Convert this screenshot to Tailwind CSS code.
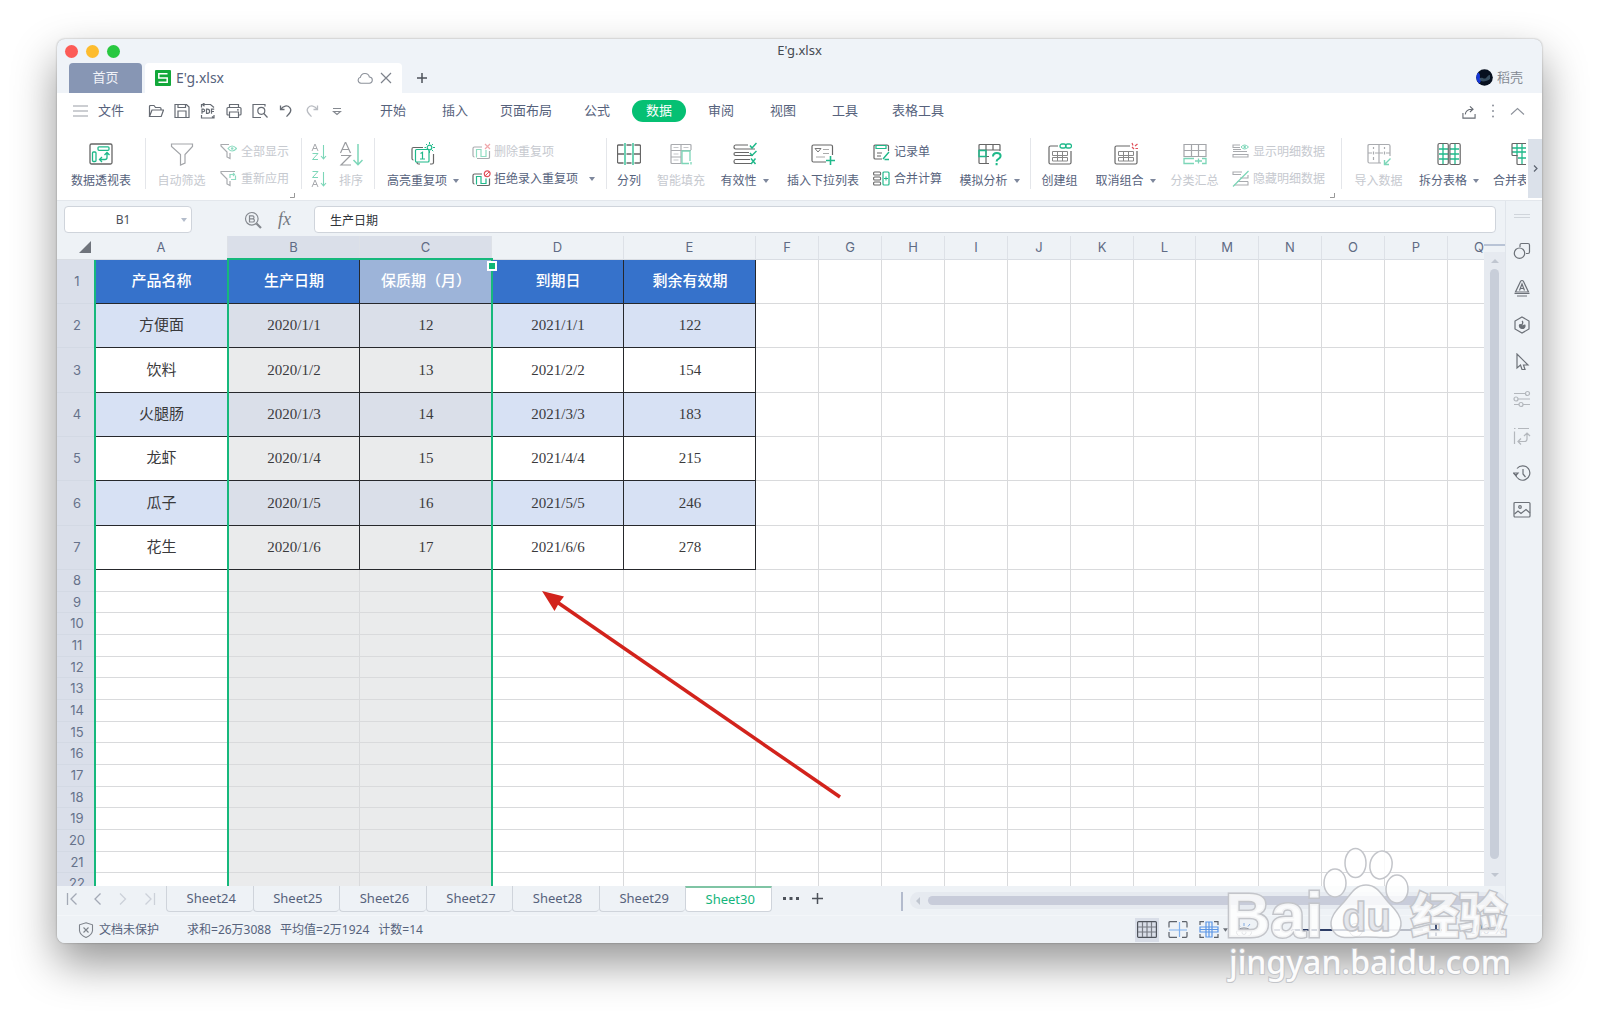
<!DOCTYPE html>
<html lang="zh-CN">
<head>
<meta charset="utf-8">
<title>E'g.xlsx</title>
<script src="https://cdn.jsdelivr.net/npm/@tailwindcss/browser@4"></script>
</head>
<body class="relative flex h-screen flex-col overflow-hidden bg-white font-['Noto_Sans','Noto_Sans_CJK_SC',sans-serif] text-xs text-[#56627c]">
<div class="mx-[57px] mt-[39px] mb-[76px] flex min-h-0 flex-1 flex-col overflow-hidden rounded-lg bg-[#eff3f8] shadow-[0_0_2px_rgba(0,0,0,0.35),0_20px_44px_rgba(0,0,0,0.42)]">

  <!-- title bar -->
  <header class="shrink-0">
    <div class="grid h-6 grid-cols-3 items-center">
      <div class="flex gap-2 pl-2">
        <span class="size-[13px] rounded-full bg-[#fc5b57]"></span>
        <span class="size-[13px] rounded-full bg-[#fdbc2e]"></span>
        <span class="size-[13px] rounded-full bg-[#28c840]"></span>
      </div>
      <h1 class="text-center text-[13px] text-[#454a52]">E'g.xlsx</h1>
    </div>
    <div class="flex h-[30px] items-center text-[13px]">
      <button class="ml-3 h-[30px] w-[73px] rounded-t-sm bg-[#8796b4] text-[#f1f3f8]">首页</button>
      <div class="ml-[3px] flex h-[30px] w-[257px] items-center rounded-t-sm bg-white pl-[10px] pr-[10px]">
        <svg class="size-4" viewBox="0 0 16 16"><rect width="16" height="16" rx="1" fill="#12a83a"/><path d="M12.500 3.800H3.800V8h8.400v4.200H3.500" fill="none" stroke="#fff" stroke-width="1.500"/></svg>
        <span class="ml-[5px] flex-1 text-sm">E'g.xlsx</span>
        <svg class="h-3 w-4" viewBox="0 0 16 12" fill="none" stroke="#8d929b" stroke-width="1.100"><path d="M4 11.200a3 3 0 0 1-.6-5.900 4.600 4.600 0 0 1 9-.3 3.100 3.100 0 0 1-.4 6.200z"/></svg>
        <button class="ml-[7px]" aria-label="关闭"><svg class="size-3" viewBox="0 0 12 12" stroke="#7d828b" stroke-width="1.200"><path d="M1 1l10 10M11 1L1 11"/></svg></button>
      </div>
      <button class="ml-[15px]" aria-label="新建标签"><svg class="size-[10px]" viewBox="0 0 10 10" stroke="#4d525a" stroke-width="1.500"><path d="M5 0v10M0 5h10"/></svg></button>
      <a href="#" class="ml-auto mr-[19px] flex items-center gap-[4px] text-[#858a93]">
        <svg class="size-[17px]" viewBox="0 0 17 17"><circle cx="8.500" cy="8.500" r="8.300" fill="#07101f"/><path d="M2 3.500A8 8 0 0 0 3 14.500c2-1 2-3 1.200-5S5 5 2 3.500z" fill="#1637d8"/><path d="M3 10c3-3 5 1 7-1s2-3 4-3v4c-2 2-7 3-9 2z" fill="#4c6a7c" opacity=".7"/></svg>
        <span>稻壳</span></a>
    </div>
  </header>

  <!-- menu row -->
  <nav class="flex h-9 shrink-0 items-center bg-white text-[13px]">
    <button class="ml-4 flex items-center gap-[10px]"><svg class="h-3 w-[15px]" viewBox="0 0 15 12" stroke="#9a9ea5" stroke-width="1.200"><path d="M0 1h15M0 6h15M0 11h15"/></svg><span>文件</span></button>
    <div class="ml-6 flex items-center gap-[10px]">
      <button aria-label="打开"><svg class="size-4" viewBox="0 0 16 16" fill="none" stroke="#666b73" stroke-width="1.200"><path d="M1.500 13.500V3.500q0-1 1-1H6l1.500 2H12q1 0 1 1V7M1.500 13.500L4 7h11.500l-2.300 6.500z"/></svg></button>
      <button aria-label="保存"><svg class="size-4" viewBox="0 0 16 16" fill="none" stroke="#666b73" stroke-width="1.200"><path d="M1 1.500h11.500L15 4v10.500H1zM4 1.500v3h7.500v-3M4 14.500V8h8v6.500"/></svg></button>
      <button aria-label="输出为PDF"><svg class="size-4" viewBox="0 0 16 16" fill="none" stroke="#666b73" stroke-width="1.200"><path d="M1.500 4.500v-3h9L14 4.500M4.500 0L2.500 1.500l2 1.800M1.500 12v3h12.500v-3M12 13.500l2 1.500"/><path d="M2 10.800V6.200h1.400a1.200 1.200 0 0 1 0 2.400H2M6.500 6.200v4.200h1a1.700 1.700 0 0 0 0-4.200zM11.500 10.800V6.200h2.700M11.500 8.500H14"/></svg></button>
      <button aria-label="打印"><svg class="size-4" viewBox="0 0 16 16" fill="none" stroke="#666b73" stroke-width="1.200"><path d="M3.500 4.500V1.500h9v3M3.500 12H2q-1 0-1-1V5.500q0-1 1-1h12q1 0 1 1V11q0 1-1 1h-1.500M3.500 9h9v5.500h-9zM11 6.800h1.800"/></svg></button>
      <button aria-label="打印预览"><svg class="size-4" viewBox="0 0 16 16" fill="none" stroke="#666b73" stroke-width="1.200"><path d="M13 3.500v-2H1v13h8"/><circle cx="9.300" cy="7.800" r="3.500"/><path d="M11.800 10.500l3.700 4"/></svg></button>
      <button aria-label="撤销"><svg class="size-4" viewBox="0 0 16 16" fill="none" stroke="#666b73" stroke-width="1.300"><path d="M2.500 2.500v4h4M2.800 6.300C5 2.500 9.500 2 11.800 4.600c2.600 3-.3 6-3.300 9"/></svg></button>
      <button aria-label="恢复" disabled><svg class="size-4" viewBox="0 0 16 16" fill="none" stroke="#b9bcc2" stroke-width="1.300"><path d="M13.500 2.500v4h-4M13.200 6.300C11 2.500 6.500 2 4.200 4.600c-2.600 3 .3 6 3.300 9"/></svg></button>
      <button aria-label="更多"><svg class="size-4" viewBox="0 0 16 16" fill="none" stroke="#858990" stroke-width="1.100"><path d="M3 5.500h8M3.500 8.500L7 11.500l3.500-3z"/></svg></button>
    </div>
    <div class="ml-4 flex items-center [&>button]:h-[22px] [&>button]:w-[62px]">
      <button>开始</button><button>插入</button><button class="w-20!">页面布局</button><button>公式</button>
      <button class="w-[54px]! mx-1 rounded-full bg-[#05c073] text-white">数据</button>
      <button>审阅</button><button>视图</button><button>工具</button><button class="w-[84px]!">表格工具</button>
    </div>
    <div class="ml-auto mr-[17px] flex items-center gap-[10px]">
      <button aria-label="分享"><svg class="mt-[3px] h-[15px] w-[14px]" viewBox="0 0 15 15" fill="none" stroke="#666b73" stroke-width="1.200"><path d="M1 8v5.500h13V9M3.500 9.500c.5-4 3-5.500 7-5.500M8.500 1l3.300 3-3.300 3"/></svg></button>
      <button aria-label="选项"><svg class="size-[14px]" viewBox="0 0 14 14" fill="#8d929b"><circle cx="7" cy="1.500" r="1"/><circle cx="7" cy="7" r="1"/><circle cx="7" cy="12.500" r="1"/></svg></button>
      <button aria-label="折叠功能区"><svg class="h-4 w-[15px]" viewBox="0 0 15 16" fill="none" stroke="#8d929b" stroke-width="1.100"><path d="M1 11.500l6.500-6 6.500 6"/></svg></button>
    </div>
  </nav>

  <!-- ribbon -->
  <div class="flex h-[72px] shrink-0 border-b border-[#e3e7ec] bg-white">
    <div class="flex min-w-0 flex-1 overflow-hidden whitespace-nowrap leading-4 [&>*]:shrink-0 [&>hr]:mt-[9px] [&>hr]:h-[51px] [&>hr]:w-px [&>hr]:border-0 [&>hr]:bg-[#e4e6ea] [&>button]:flex [&>button]:flex-col [&>button]:items-center [&>button]:gap-[7px] [&>button]:pt-[13px] [&>div]:relative [&>div]:flex [&>div]:flex-col [&>div]:gap-[7px] [&>div]:pt-[13px] [&>div>button]:flex [&>div>button]:h-5 [&>div>button]:items-center [&_svg]:fill-none [&_svg.c]:fill-[#7d879c]">
      <button class="w-[88px]"><svg class="size-6" viewBox="0 0 24 24"><rect x="1" y="2" width="22" height="20" rx="1.500" stroke="#666" stroke-width="1.300"/><g stroke="#1fb98a" stroke-width="1.300"><rect x="9" y="4.800" width="11" height="3.500" rx="1"/><rect x="3.500" y="10" width="3.500" height="9.500" rx="1"/><path d="M10.500 17.500h5.500q2 0 2-2v-4.500M13 15l-2.500 2.500L13 20M15.500 13l2.500-2.500 2.500 2.500"/></g></svg><span>数据透视表</span></button>
      <hr>
      <button class="w-[71px] text-[#c6c9cf]"><svg class="size-6" viewBox="0 0 24 24"><path d="M1.500 2h21v2.500l-7.500 8V21l-4.500 2v-10.500l-9-8z" stroke="#a3a5a9" stroke-width="1.200"/></svg><span>自动筛选</span></button>
      <div class="w-[84px] pl-[3px]">
        <button class="gap-1 text-[#c6c9cf]"><svg class="h-[18px] w-[17px]" viewBox="0 0 17 18"><path d="M9 1.500H1V3l6 6v5l3 1.500V10" stroke="#a9abaf" stroke-width="1.200"/><path d="M8 5.500q4-5 8.500 0q-4.500 5-8.500 0z" stroke="#8fdcc2" stroke-width="1.200"/><circle cx="12.200" cy="5.500" r="1.300" fill="#8fdcc2"/></svg><span>全部显示</span></button>
        <button class="gap-1 text-[#c6c9cf]"><svg class="h-[18px] w-[17px]" viewBox="0 0 17 18"><path d="M15 1.500H1V3l6 6v5l3 1.500V11" stroke="#a9abaf" stroke-width="1.200"/><path d="M10 8V4.500h4.500M15.500 5.500V9.500H11M13 3l1.500 1.500L13 6" stroke="#8fdcc2" stroke-width="1.200"/></svg><span>重新应用</span></button>
        <svg class="absolute right-[6px] bottom-[2px] size-[5px]" viewBox="0 0 5 5" stroke="#999"><path d="M0 4.500h4.500V0"/></svg>
      </div>
      <hr>
      <div class="w-[33px] items-center">
        <button class="text-[#c6c9cf]" aria-label="升序"><svg class="h-[18px] w-4" viewBox="0 0 16 18"><path d="M1 8L4 1l3 7M2 5.500h4" stroke="#a9abaf"/><path d="M12.500 2v13.500M10 13l2.500 2.800L15 13" stroke="#7cd6b8" stroke-width="1.100"/><path d="M1.500 10.500h5.500L1.500 16.500H7" stroke="#7cd6b8"/></svg></button>
        <button class="text-[#c6c9cf]" aria-label="降序"><svg class="h-[18px] w-4" viewBox="0 0 16 18"><path d="M1 17l3-7 3 7M2 14.500h4" stroke="#a9abaf"/><path d="M1.500 1.500h5.500L1.500 7.500H7" stroke="#7cd6b8"/><path d="M12.500 2v13.500M10 13l2.500 2.800L15 13" stroke="#7cd6b8" stroke-width="1.100"/></svg></button>
      </div>
      <button class="w-8 text-[#c6c9cf]"><svg class="size-6" viewBox="0 0 24 24"><path d="M1.500 11L6.500 0l5 11M3 7.500h7M2 13.500h9.500L2 23h10" stroke="#9a9ca0" stroke-width="1.200"/><path d="M19 2v20.500M14.500 18l4.500 4.700 4.500-4.700" stroke="#7cd6b8" stroke-width="1.500"/></svg><span>排序</span></button>
      <hr class="ml-[7px]">
      <button class="w-24"><svg class="size-6" viewBox="0 0 24 24"><path d="M12 5.500H2.500q-1.500 0-1.500 1.500v9.500q0 1.500 1.500 1.500M22.500 12v8.500q0 1.500-1.500 1.500h-2M6 20v.5q0 1.500 1.500 1.500H9" stroke="#666" stroke-width="1.200"/><rect x="4.500" y="7.500" width="13.500" height="12.500" rx="1" stroke="#1fb98a" stroke-width="1.200"/><path d="M9.500 11.500l2-1.200V17M9 17h5" stroke="#1fb98a" stroke-width="1.200"/><circle cx="18.500" cy="5.500" r="2.300" fill="#fff" stroke="#1fb98a" stroke-width="1.200"/><path d="M18.500 0v2M18.500 9v2M13.500 5.500h1.500M22 5.500h2M15 2l1 1M21 8l1.200 1.200M22 2l-1 1" stroke="#1fb98a"/></svg><span class="flex items-center gap-[6px]">高亮重复项<svg class="c h-1 w-[6px]" viewBox="0 0 6 4"><path d="M0 0h6L3 4z"/></svg></span></button>
      <div class="w-[134px] pl-px">
        <button class="gap-[3px] text-[#c6c9cf]"><svg class="h-[18px] w-[19px]" viewBox="0 0 19 18"><path d="M10 4H2.500Q1 4 1 5.500v7q0 1.500 1.500 1.500M17.500 8v6.500q0 1-1.500 1H5" stroke="#a9abaf" stroke-width="1.200"/><path d="M4.500 14.500V6.500H9v7h5V7" stroke="#8fdcc2" stroke-width="1.200"/><path d="M13 1l5 5M18 1l-5 5" stroke="#f0a8ac" stroke-width="1.200"/></svg><span>删除重复项</span></button>
        <button class="gap-[3px]"><svg class="h-[18px] w-[19px]" viewBox="0 0 19 18"><path d="M10 4H2.500Q1 4 1 5.500v7q0 1.500 1.500 1.500M17.500 8.500v6q0 1-1.500 1H5" stroke="#666" stroke-width="1.200"/><path d="M4.500 14.500V6.500H9v7h5V8.500" stroke="#1fb98a" stroke-width="1.200"/><circle cx="15.200" cy="3.800" r="2.900" stroke="#e0515a" stroke-width="1.200"/><path d="M13.200 5.800l4-4" stroke="#e0515a"/></svg><span>拒绝录入重复项</span><svg class="c ml-2 h-1 w-[6px]" viewBox="0 0 6 4"><path d="M0 0h6L3 4z"/></svg></button>
      </div>
      <hr class="ml-px">
      <button class="w-[44px]"><svg class="size-6" viewBox="0 0 24 24"><path d="M6.500 3H1.500Q.5 3 .5 4v16q0 1 1 1h5M.5 12H7M17.500 3h5q1 0 1 1v16q0 1-1 1h-5M17 12h6.500M9.500 3h5M9.500 12h5M9.500 21h5" stroke="#666" stroke-width="1.300"/><path d="M8 1v22M16 1v22" stroke="#1fb98a" stroke-width="1.300"/></svg><span>分列</span></button>
      <button class="w-[60px] text-[#c6c9cf]"><svg class="size-6" viewBox="0 0 24 24"><path d="M22 8V3.500Q22 2.500 21 2.500H3Q2 2.500 2 3.500v17q0 1 1 1h9M2 8.500h20M12 3v19M2 15h10" stroke="#a9abaf" stroke-width="1.200"/><path d="M4.500 5.500h5M4.500 12h5M4.500 18h5M14.500 5.500h5" stroke="#c4c6c9"/><path d="M21 19V9h-8v12.500h7M22 20v2.500" stroke="#7cd6b8" stroke-width="1.300"/></svg><span>智能填充</span></button>
      <button class="w-[67px]"><svg class="size-6" viewBox="0 0 24 24"><path d="M15 3H2.500Q1 3 1 5t1.500 2H22M16 10.500H2.500q-1.500 0-1.500 1.500t1.500 1.500H20M17 17.500H2.500Q1 17.500 1 19.500t1.500 2H18" stroke="#666" stroke-width="1.200"/><path d="M17 3.500l2 2.500 4.500-5M17 11l2 2.500 4.500-4.500M18 16.500l4.500 5.500M22.500 16.500L18 22" stroke="#1fb98a" stroke-width="1.500"/></svg><span class="flex items-center gap-[6px]">有效性<svg class="c h-1 w-[6px]" viewBox="0 0 6 4"><path d="M0 0h6L3 4z"/></svg></span></button>
      <button class="w-[90px]"><svg class="size-6" viewBox="0 0 24 24"><path d="M15 20H2.500Q1 20 1 18.500v-14Q1 3 2.500 3H20q1.500 0 1.500 1.500V13" stroke="#666" stroke-width="1.200"/><path d="M4 6.500h6l-3 3.500z" stroke="#777"/><path d="M12 7.500h6M12 11.500h6M5 15h9" stroke="#aaa"/><path d="M19.500 14v9M15 18.500h9" stroke="#1fb98a" stroke-width="1.600"/></svg><span>插入下拉列表</span></button>
      <div class="w-[82px] pl-[5px]">
        <button class="gap-1"><svg class="h-[18px] w-[17px]" viewBox="0 0 17 18"><path d="M9 16H2.500Q1 16 1 15V3q0-1 1.500-1H14q1.500 0 1.500 1v5M4 10h5M4 13h4" stroke="#666" stroke-width="1.200"/><path d="M3 2.500h10v3H3z" stroke="#1fb98a" stroke-width="1.200"/><path d="M10 16l6-7M11.500 16.500h4.500" stroke="#1fb98a" stroke-width="1.400"/></svg><span>记录单</span></button>
        <button class="gap-1"><svg class="h-[18px] w-[17px]" viewBox="0 0 17 18"><g stroke="#666" stroke-width="1.100"><rect x=".6" y="2" width="7" height="3" rx="1"/><rect x=".6" y="7" width="7" height="3" rx="1"/><rect x=".6" y="12" width="7" height="3" rx="1"/></g><rect x="10" y="2" width="6" height="13" rx="1" stroke="#1fb98a" stroke-width="1.200"/><path d="M13 6.500v4M11 8.500h4" stroke="#1fb98a"/></svg><span>合并计算</span></button>
      </div>
      <button class="w-[79px]"><svg class="size-6" viewBox="0 0 24 24"><path d="M22 9V3.500Q22 2.500 21 2.500H2Q1 2.500 1 3.500v17q0 1 1 1h9M1 8h21M8 2.500V21M15 2.500V8M1 14.500h10" stroke="#666" stroke-width="1.200"/><path d="M1 8.500h7v6H1z" stroke="#1fb98a" stroke-width="1.400"/><path d="M15 14.500q0-3.500 3.800-3.500t3.800 3q0 1.800-2 2.800t-2 2.700M18.600 21v2.300" stroke="#1fb98a" stroke-width="2"/></svg><span class="flex items-center gap-[6px]">模拟分析<svg class="c h-1 w-[6px]" viewBox="0 0 6 4"><path d="M0 0h6L3 4z"/></svg></span></button>
      <hr class="ml-px">
      <button class="w-[57px]"><svg class="size-6" viewBox="0 0 24 24"><path d="M10 4H2.500Q1 4 1 5.500v15Q1 22 2.500 22h19q1.500 0 1.500-1.500V9" stroke="#666" stroke-width="1.200"/><path d="M4.500 9.500h15v4h-15zM4.500 15.500h15v3.500h-15zM9.500 9.500v9.500M14.500 9.500v9.500" stroke="#888"/><rect x="12" y="2" width="6" height="4" rx="2" stroke="#1fb98a" stroke-width="1.300"/><rect x="17.500" y="2" width="6" height="4" rx="2" stroke="#1fb98a" stroke-width="1.300"/></svg><span>创建组</span></button>
      <button class="w-[75px]"><svg class="size-6" viewBox="0 0 24 24"><path d="M16 4H2.500Q1 4 1 5.500v15Q1 22 2.500 22h19q1.500 0 1.500-1.500V9" stroke="#666" stroke-width="1.200"/><path d="M4.500 9.500h15v4h-15zM4.500 15.500h15v3.500h-15zM9.500 9.500v9.500M14.500 9.500v9.500" stroke="#888"/><path d="M18 1l1 2.500M23.500 2l-2.500 2M21.500 6.500H24M18 5l2 2" stroke="#e0515a" stroke-width="1.200"/></svg><span class="flex items-center gap-[6px]">取消组合<svg class="c h-1 w-[6px]" viewBox="0 0 6 4"><path d="M0 0h6L3 4z"/></svg></span></button>
      <button class="w-[63px] text-[#c6c9cf]"><svg class="size-6" viewBox="0 0 24 24"><path d="M1 2.500h22v12H1zM1 8.500h22M8.500 2.500v12M15.500 2.500v12" stroke="#a3a5a9" stroke-width="1.200"/><path d="M11 21.500H1v-5h10M19 16.500h4v5h-4M12 19h7M15.500 16.500v5" stroke="#7cd6b8" stroke-width="1.300"/></svg><span>分类汇总</span></button>
      <div class="w-[115px] pl-[6px]">
        <button class="gap-[4px] text-[#c6c9cf]"><svg class="h-[18px] w-[17px]" viewBox="0 0 17 18"><path d="M8 2H1v2.500h7M9 6.500H1M15 8.500H1M1 11.500h15v2.500H1z" stroke="#a9abaf" stroke-width="1.100"/><path d="M9 4q3.500-4 7.500 0q-4 4-7.500 0z" stroke="#7cd6b8"/><circle cx="12.700" cy="4" r="1.200" fill="#7cd6b8"/></svg><span>显示明细数据</span></button>
        <button class="gap-[4px] text-[#c6c9cf]"><svg class="h-[18px] w-[17px]" viewBox="0 0 17 18"><path d="M10 2H1v2.500h8M16 5v3H8M16 11.500H5M2 15h14v-3.500" stroke="#a9abaf" stroke-width="1.100"/><path d="M1 16.500L16.500 1" stroke="#7cd6b8" stroke-width="1.200"/></svg><span>隐藏明细数据</span></button>
        <svg class="absolute right-[6px] bottom-[2px] size-[5px]" viewBox="0 0 5 5" stroke="#999"><path d="M0 4.500h4.500V0"/></svg>
      </div>
      <hr>
      <button class="w-[73px] text-[#c6c9cf]"><svg class="size-6" viewBox="0 0 24 24"><path d="M14 21H2.500Q1 21 1 19.500v-16Q1 2.500 2.500 2.500h19Q23 2.500 23 4v10M12 2.500V21M1 11h4M8 11h8M19 11h4M6.500 5v2M6.500 9.500v3M17.500 5v2M17.500 9.500v3M6.500 15v3" stroke="#a9abaf" stroke-width="1.200"/><path d="M23.500 16.500l-6 6M17.500 18v4.500H22" stroke="#7cd6b8" stroke-width="1.400"/></svg><span>导入数据</span></button>
      <button class="w-[68px]"><svg class="size-6" viewBox="0 0 24 24"><path d="M2 7h9M2 12h9M2 17h9M6 2v20M13 7h9M13 12h9M13 17h9M18 2v20" stroke="#1fb98a" stroke-width="1.300"/><rect x="1" y="1.500" width="10.300" height="21" rx="1.500" stroke="#666" stroke-width="1.200"/><rect x="12.900" y="1.500" width="10.300" height="21" rx="1.500" stroke="#666" stroke-width="1.200"/></svg><span class="flex items-center gap-[6px]">拆分表格<svg class="c h-1 w-[6px]" viewBox="0 0 6 4"><path d="M0 0h6L3 4z"/></svg></span></button>
      <button class="w-[80px]"><svg class="size-6" viewBox="0 0 24 24"><path d="M1 6h22M1 10h22M7 16h16M6 2v12M11 2v20M16 2v20" stroke="#1fb98a" stroke-width="1.300"/><path d="M23 1.500H2Q1 1.500 1 2.500v10q0 1 1 1h4v8q0 1 1 1h16" stroke="#666" stroke-width="1.200"/></svg><span class="flex items-center gap-[6px]">合并表格<svg class="c h-1 w-[6px]" viewBox="0 0 6 4"><path d="M0 0h6L3 4z"/></svg></span></button>
    </div>
    <button class="ml-[2px] mt-[10px] mb-[2px] flex w-[14px] items-center justify-center bg-[#dbe1ea]" aria-label="向右滚动"><svg class="h-[7px] w-[5px]" viewBox="0 0 5 7" fill="none" stroke="#5c6370" stroke-width="1.200"><path d="M1 .5l3 3-3 3"/></svg></button>
  </div>

  <main class="flex min-h-0 flex-1 bg-[#eef2f6]">
    <section class="flex min-w-0 flex-1 flex-col">
      <!-- formula bar -->
      <div class="flex h-[35px] shrink-0 items-start px-[7px] pt-[5px]">
        <div class="flex h-[27px] w-[128px] items-center rounded-[4px] border border-[#cfd4db] bg-white pr-1">
          <input aria-label="名称框" value="B1" class="w-full min-w-0 flex-1 bg-transparent text-center text-xs text-[#4c515a] outline-none">
          <svg class="h-1 w-[6px]" viewBox="0 0 6 4" fill="#b3bccb"><path d="M0 0h6L3 4z"/></svg>
        </div>
        <button class="ml-[52px] flex h-[27px] items-center" aria-label="查找"><svg class="size-[18px]" viewBox="0 0 18 18" fill="none" stroke="#85898f" stroke-width="1.200"><circle cx="7.800" cy="7.800" r="6.300"/><path d="M12.500 12.500l4.500 4.500" stroke-width="2.200"/><path d="M5.500 11V4.800h3a1.500 1.500 0 0 1 0 3h-3 3.300a1.600 1.600 0 0 1 0 3.200z"/></svg></button>
        <button class="ml-4 h-[26px] font-['Liberation_Serif',serif] text-lg leading-5 text-[#74787f] italic" aria-label="插入函数">fx</button>
        <input aria-label="编辑栏" value="生产日期" class="ml-[23px] mr-[2px] h-[27px] min-w-0 flex-1 rounded-[4px] border border-[#cfd4db] bg-white px-[15px] text-xs text-[#2f333a] outline-none">
      </div>

      <!-- grid -->
      <div class="flex min-h-0 flex-1">
        <div class="relative min-w-0 flex-1 overflow-hidden bg-white">
          <table id="grid" class="table-fixed border-separate border-spacing-0 text-[#3a3a3c]"></table>
          <!-- selection outline -->
          <div class="absolute top-6 bottom-0 left-[37px] w-[2px] bg-[#16b87c]"></div>
          <div class="absolute top-[22px] -bottom-1 left-[170px] w-[266px] border-2 border-[#16b87c]"></div>
          <div class="absolute top-[25px] left-[430px] size-[10px] border-2 border-white bg-[#0fb878]"></div>
          <svg class="absolute top-[350px] left-[480px] h-[216px] w-[310px]" viewBox="0 0 310 216"><path d="M303 211L20 16" stroke="#d2231c" stroke-width="3.500"/><path d="M5 5l22 5.500-5 6.500-4.500 8z" fill="#d2231c"/></svg>
        </div>
        <div class="flex w-[21px] flex-col items-center bg-[#e6eaf0]">
          <div class="h-4 w-full bg-[#eef2f6] pt-2"><div class="h-[2px] w-full bg-[#b9c4d6]"></div></div>
          <svg class="mt-[7px] h-1 w-2" viewBox="0 0 8 4" fill="#c0c6d0"><path d="M0 4h8L4 0z"/></svg>
          <div class="mt-[6px] w-[9px] flex-1 rounded-full bg-[#c8ced9]"></div>
          <svg class="mt-[14px] mb-[9px] h-1 w-2" viewBox="0 0 8 4" fill="#c0c6d0"><path d="M0 0h8L4 4z"/></svg>
        </div>
      </div>

      <!-- sheet tabs -->
      <div class="flex h-[29px] shrink-0 items-start text-[13px]">
        <div class="flex w-[109px] items-center gap-[14px] pt-[6px] pl-[9px] [&_svg]:h-[14px] [&_svg]:w-3 [&_svg]:fill-none">
          <button aria-label="第一个"><svg viewBox="0 0 12 14" stroke="#a3a9b5" stroke-width="1.300"><path d="M1.500 1v12M10.500 1.500L5 7l5.500 5.500"/></svg></button>
          <button aria-label="上一个"><svg viewBox="0 0 12 14" stroke="#a3a9b5" stroke-width="1.300"><path d="M8.500 1.500L3 7l5.500 5.500"/></svg></button>
          <button aria-label="下一个"><svg viewBox="0 0 12 14" stroke="#ccd1d9" stroke-width="1.300"><path d="M2 1.500L7.500 7 2 12.500"/></svg></button>
          <button aria-label="最后一个"><svg viewBox="0 0 12 14" stroke="#ccd1d9" stroke-width="1.300"><path d="M10.500 1v12M1.500 1.500L7 7l-5.500 5.500"/></svg></button>
        </div>
        <div class="grid h-[26px] w-[606px] grid-cols-7 [&>button]:rounded-b-[4px] [&>button]:border-b [&>button]:border-l [&>button]:border-[#cfd4db] [&>button]:pt-px [&>button]:pl-[3px]">
          <button>Sheet24</button><button>Sheet25</button><button>Sheet26</button><button>Sheet27</button><button>Sheet28</button><button>Sheet29</button>
          <button class="border-t-2 border-r border-t-[#7fc4a4]! bg-white text-[#14b57c]">Sheet30</button>
        </div>
        <button class="ml-[11px] mt-[11px]" aria-label="更多工作表"><svg class="h-[3px] w-4" viewBox="0 0 16 3" fill="#4d525a"><path d="M0 0h3v3H0zM6.500 0h3v3h-3zM13 0h3v3h-3z"/></svg></button>
        <button class="ml-[13px] mt-[7px]" aria-label="新建工作表"><svg class="size-[11px]" viewBox="0 0 11 11" stroke="#4d525a" stroke-width="1.500"><path d="M5.500 0v11M0 5.500h11"/></svg></button>
        <div class="ml-[78px] mt-[6px] h-[19px] w-[2px] bg-[#b3bbcd]"></div>
        <div class="ml-[7px] mt-[6px] flex h-[17px] flex-1 items-center rounded-full bg-[#e6eaf0] pl-[6px] pr-3">
          <svg class="h-2 w-1" viewBox="0 0 4 8" fill="#c0c6d0"><path d="M4 0v8L0 4z"/></svg>
          <div class="ml-2 h-[9px] flex-1 rounded-full bg-[#c8ccda]"></div>
        </div>
      </div>
    </section>

    <!-- side tools -->
    <aside class="flex w-[37px] shrink-0 flex-col items-center gap-[19px] border-l border-[#e0e5eb] pr-1 [&_svg]:size-[18px] [&_svg]:fill-none [&_svg]:stroke-[#6c7178] [&_svg]:[stroke-width:1.2]">
      <div class="mt-[13px] mb-[5px] h-1 w-4 border-y border-[#d0d5db]"></div>
      <button aria-label="形状"><svg viewBox="0 0 18 18"><path d="M7 5V3q0-1.500 1.500-1.500H15q1.500 0 1.500 1.500v7q0 1.500-1.500 1.500h-2"/><circle cx="6.500" cy="11.200" r="5.200"/></svg></button>
      <button aria-label="艺术字"><svg viewBox="0 0 18 18"><path d="M9 1.500q1 0 1.500 1l5 10.500h-13l5-10.500q.5-1 1.500-1zM6.500 11.500L9 5l2.500 6.500M7.300 9.500h3.400M1.500 14.500h15M4 17h10"/></svg></button>
      <button aria-label="资源"><svg viewBox="0 0 18 18"><path d="M9 1l7 4v8l-7 4-7-4V5z"/><path d="M9 5c2 1.500 0 3-.2 4C8 8.500 7 8.500 7 8.500 5.500 10 7 12.500 9 12.500s3.500-1.500 2.800-3.500c-1.300 0-2.300 1-2.800 2" fill="#6c7178"/></svg></button>
      <button aria-label="选择"><svg viewBox="0 0 18 18"><path d="M4 1v14l3.500-3L9 16.500h3L10.500 12H15z"/></svg></button>
      <button aria-label="属性" disabled class="opacity-45"><svg viewBox="0 0 18 18"><path d="M1 3.500h11.500M5 9h12M1 14.500h5M10 14.500h7"/><circle cx="14.500" cy="3.500" r="2"/><circle cx="3" cy="9" r="2"/><circle cx="8" cy="14.500" r="2"/></svg></button>
      <button aria-label="透视表" disabled class="opacity-45"><svg viewBox="0 0 18 18"><path d="M1 1.500h1.500M5 1.500h11M1.500 4.500V17M5.500 14.500h6q2.500 0 2.500-2.500V6.500M8 11.500l-3 3 3 3M11 9l3-3 3 3"/></svg></button>
      <button aria-label="历史"><svg viewBox="0 0 18 18"><path d="M2.500 10a7.200 7.200 0 1 0 1.500-5.500"/><path d="M.5 9l2.300 2.500L5 9zM10 5v5l2.500 3"/></svg></button>
      <button aria-label="图片"><svg viewBox="0 0 18 18"><rect x="1" y="1.500" width="16" height="14.500" rx="1"/><circle cx="7" cy="6" r="1.300"/><path d="M1.500 13l3.500-3 3 2.500 5-4 4 3.500"/></svg></button>
    </aside>
  </main>

  <!-- status bar -->
  <footer class="flex h-7 shrink-0 items-center border-t border-[#f3f6f9] bg-[#eef2f6]">
    <svg class="ml-[21px] size-4" viewBox="0 0 16 16" fill="none" stroke="#7e838b" stroke-width="1.100"><path d="M8 .8l6.500 2v6Q14 13 8 15.500 2 13 1.500 8.800v-6zM5.500 5.500l5 5M10.500 5.500l-5 5"/></svg>
    <span class="ml-[5px]">文档未保护</span>
    <span class="ml-7">求和=26万3088</span><span class="ml-[9px]">平均值=2万1924</span><span class="ml-[9px]">计数=14</span>
    <div class="ml-auto flex items-center">
      <button class="flex h-6 w-6 items-center justify-center bg-[#d9dee8]" aria-label="普通视图"><svg class="h-[17px] w-5" viewBox="0 0 20 17" fill="none" stroke="#4f545c" stroke-width="1.200"><rect x=".6" y=".6" width="18.800" height="15.800" rx="1"/><path d="M1 6h18M1 11h18M5.500 1v15M10 1v15M14.500 1v15" stroke="#777b83"/></svg></button>
      <button class="ml-[9px]" aria-label="分页预览"><svg class="h-[17px] w-5" viewBox="0 0 20 17" fill="none" stroke="#5c6169" stroke-width="1.200"><path d="M9 .6H2Q1 .6 1 2v4.500M1 11v4q0 1.400 1 1.400h7M14 .6h4q1 0 1 1.400v4.500M19 11v4q0 1.400-1 1.400h-4"/><path d="M1 9h18M11.500 1v15" stroke="#7fb0ee"/></svg></button>
      <button class="ml-[11px]" aria-label="页面布局"><svg class="h-[17px] w-5" viewBox="0 0 20 17" fill="none" stroke="#5c6169" stroke-width="1.200"><path d="M5 .6H1V4M1 13v3.400h4M15 .6h4V4M19 13v3.400h-4"/><path d="M1 6h18v5H1zM7 1h6v15H7zM10 1v15M1 8.500h18" stroke="#5b96e6"/></svg></button>
      <svg class="ml-1 h-1 w-[5px]" viewBox="0 0 6 4" fill="#6b7078"><path d="M0 0h6L3 4z"/></svg>
      <button class="ml-2" aria-label="护眼模式"><svg class="size-4" viewBox="0 0 16 16" fill="none" stroke="#7b8088"><ellipse cx="8" cy="10.500" rx="7.500" ry="4.500"/><circle cx="8" cy="10.500" r="2"/><path d="M2 2l2 2.500M14 2l-2 2.500M8 1v3" stroke="#7fa8e0"/></svg></button>
      <button class="ml-5" aria-label="缩小"><svg class="size-2" viewBox="0 0 8 8" stroke="#3c4a6c" stroke-width="1.500"><path d="M0 4h8"/></svg></button>
      <input type="range" aria-label="缩放" value="50" class="ml-[9px] h-[2px] w-[134px] appearance-none bg-linear-to-r from-[#2c3c66] from-50% to-[#b9bec8] to-50% [&::-webkit-slider-thumb]:size-[14px] [&::-webkit-slider-thumb]:appearance-none [&::-webkit-slider-thumb]:rounded-full [&::-webkit-slider-thumb]:border [&::-webkit-slider-thumb]:border-[#8c919a] [&::-webkit-slider-thumb]:bg-white">
      <button class="ml-[7px]" aria-label="放大"><svg class="size-3" viewBox="0 0 12 12" stroke="#2c3c66" stroke-width="1.800"><path d="M0 6h12M6 0v12"/></svg></button>
      <span class="ml-[27px] mr-[37px] font-['Liberation_Serif',serif] text-sm">100 %</span>
    </div>
  </footer>
</div>

<!-- watermark -->
<svg class="pointer-events-none absolute right-[79px] bottom-[14px] h-[160px] w-[300px]" viewBox="0 0 300 160" fill="#fff" fill-opacity=".8" stroke="#c3c5ca" stroke-width="1.500">
  <ellipse cx="115" cy="38" rx="11" ry="14"/><ellipse cx="135.500" cy="18" rx="10.500" ry="14.500"/><ellipse cx="161" cy="20" rx="11" ry="14" transform="rotate(12 161 20)"/><ellipse cx="177" cy="44" rx="11" ry="14"/>
  <path d="M146 40C157 40 161 49 168 57C176 65 184 74 180 84C176 96 163 92 146 92S118 96 112 84C108 74 116 65 124 57C131 49 135 40 146 40Z"/>
  <g font-family="Liberation Sans, sans-serif" font-weight="700"><text x="5" y="92" font-size="63" stroke-width="3" paint-order="stroke">Bai</text><text x="122" y="86" font-size="40" fill="#dfe1e8">du</text></g>
  <text x="191" y="88" font-family="Noto Sans CJK SC, sans-serif" font-weight="900" font-size="48" stroke-width="3" paint-order="stroke">经验</text>
  <text x="9" y="129" font-family="Noto Sans, sans-serif" font-size="32" font-weight="500" stroke="#c3c5c9" stroke-width="2" fill-opacity=".95" paint-order="stroke">jingyan.baidu.com</text>
</svg>

<script>
const colW = [38,133,132,132,132,132,63,63,63,63,63,63,62,63,63,63,63,63];
const tall = [44,44,45,44,44,45,44], low = [22,21,22,22,21,22,22,21,22,22,21,22,22,21,22];
const data = [
  ['产品名称','生产日期','保质期（月）','到期日','剩余有效期'],
  ['方便面','2020/1/1','12','2021/1/1','122'],
  ['饮料','2020/1/2','13','2021/2/2','154'],
  ['火腿肠','2020/1/3','14','2021/3/3','183'],
  ['龙虾','2020/1/4','15','2021/4/4','215'],
  ['瓜子','2020/1/5','16','2021/5/5','246'],
  ['花生','2020/1/6','17','2021/6/6','278']];
const total = colW.reduce((a, b) => a + b, 0);
let html = '<colgroup>' + colW.map(w => `<col style="width:${w}px">`).join('') + '</colgroup><thead><tr>';
const head = "h-6 border-b border-[#d9dde3] p-0 pb-[2px] font-['Inter',sans-serif] text-[13px] leading-4 font-normal text-[#5f6b84] ";
html += `<th class="${head} bg-[#eef2f6]"><svg class="ml-auto mr-1 size-3" viewBox="0 0 12 12" fill="#6f747c"><path d="M12 0v12H0z"/></svg></th>`;
for (let c = 1; c < colW.length; c++) {
  const sel = c === 2 || c === 3;
  html += `<th scope="col" class="${head} border-r border-r-[#dde1e7] ${sel ? 'bg-[#dadfe9]' : 'bg-[#eef2f6]'}">${String.fromCharCode(64 + c)}</th>`;
}
html += '</tr></thead><tbody>';
[...tall, ...low].forEach((h, r) => {
  html += `<tr style="height:${h}px"><th scope="row" class="border-b border-[#d3d9e4] bg-[#dadfea] p-0 pb-px pl-[2px] font-['Inter',sans-serif] text-[13px] leading-4 font-normal text-[#66728a]">${r + 1}</th>`;
  for (let c = 1; c < colW.length; c++) {
    const inData = r < 7 && c < 6, sel = c === 2 || c === 3;
    let cls = 'border-r border-b p-0 text-center leading-4 ';
    cls += inData ? 'border-[#26282c] ' : 'border-[#d9dadc] ';
    if (inData && r === 0) cls += (c === 3 ? 'bg-[#9db4d9]' : 'bg-[#3672cb]') + ' text-white font-medium ';
    else if (inData && r % 2) cls += sel ? 'bg-[#dadfe9] ' : 'bg-[#d7e1f4] ';
    else if (sel) cls += 'bg-[#eaebec] ';
    if (inData) cls += "pl-px pb-px font-['Liberation_Serif','Noto_Sans_CJK_SC',serif] text-[15px] ";
    html += `<td class="${cls}">${inData ? data[r][c - 1] : ''}</td>`;
  }
  html += '</tr>';
});
const grid = document.getElementById('grid');
grid.style.width = total + 'px';
grid.innerHTML = html + '</tbody>';
</script>
</body>
</html>
